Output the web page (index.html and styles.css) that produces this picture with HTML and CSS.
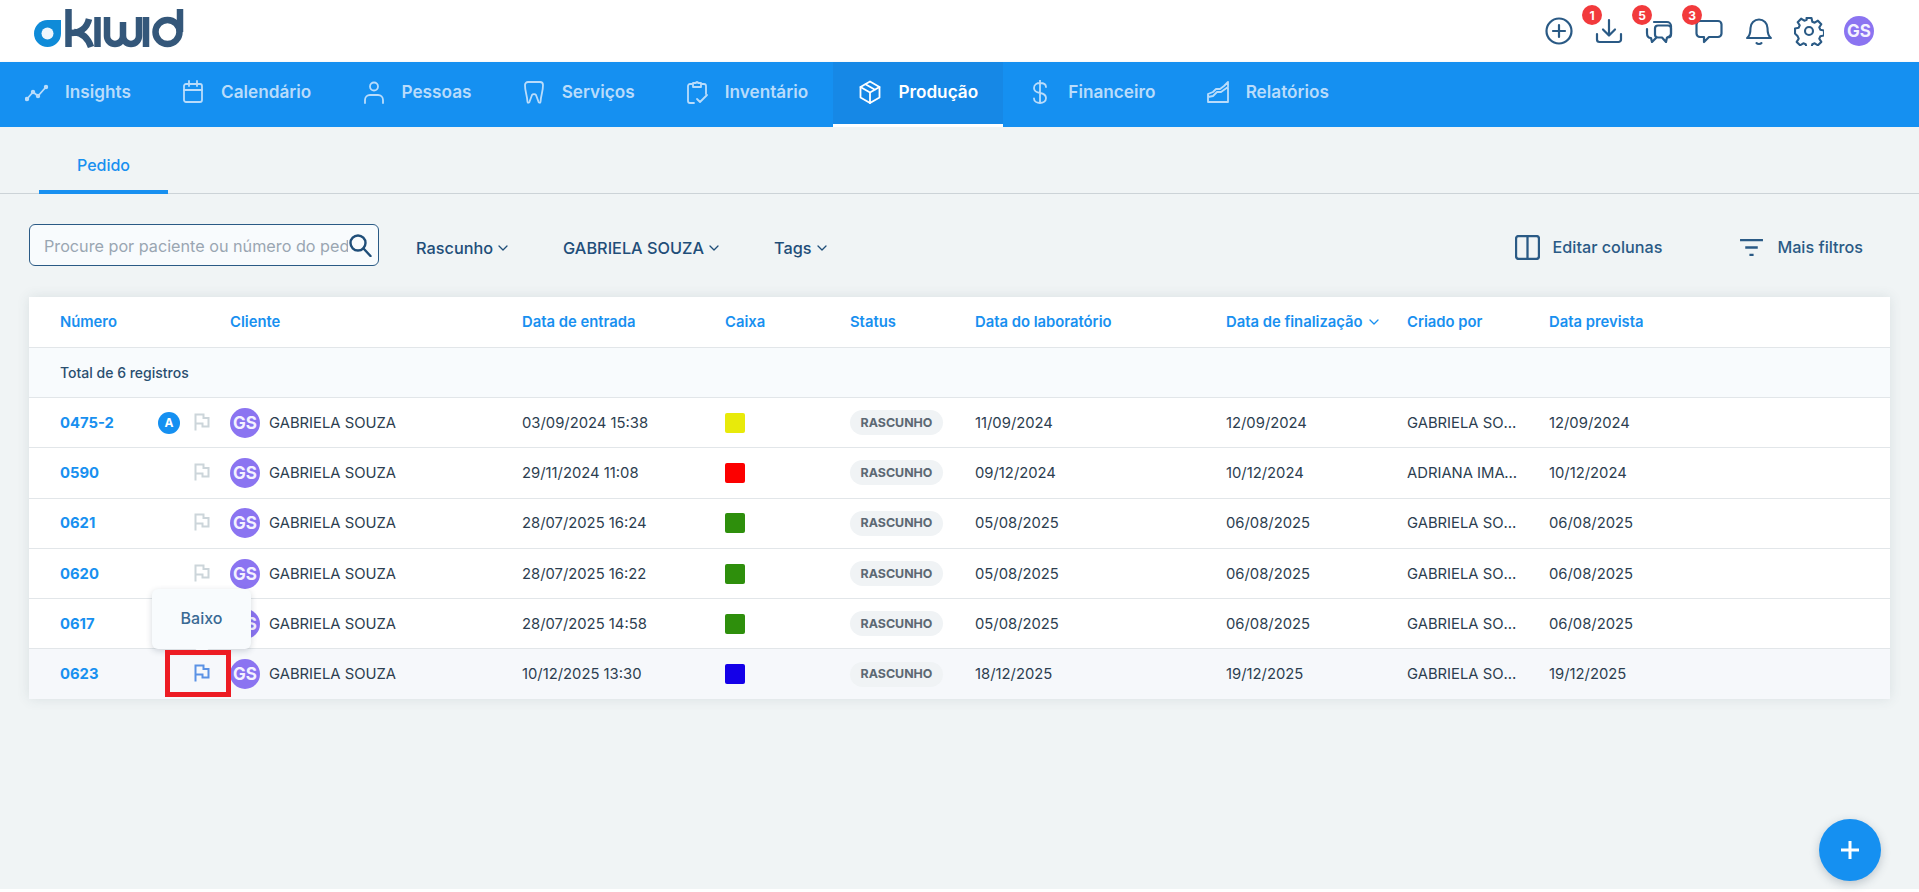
FILE: index.html
```html
<!DOCTYPE html>
<html lang="pt-BR">
<head>
<meta charset="utf-8">
<title>Kiwid - Produção</title>
<link rel="stylesheet" href="styles.css">
</head>
<body>
<svg class="sprite" aria-hidden="true">
  <symbol id="flag" viewBox="0 0 16 18"><path d="M1.500 17.500V1.500H9.500V5h5v8.500H8.500V10.500H1.500" fill="none" stroke="currentColor" stroke-width="2"/></symbol>
  <symbol id="chev" viewBox="0 0 10 6"><path d="M1 1l4 4 4-4" fill="none" stroke="currentColor" stroke-width="1.300" stroke-linecap="round" stroke-linejoin="round"/></symbol>
</svg>
<div class="app">
<header class="topbar">
  <svg class="logo" viewBox="0 0 152 40" role="img" aria-label="Kiwid">
    <path d="M13.500 12H27v13.500A13.500 13.500 0 1 1 13.500 12z" fill="#0f8bd8"/>
    <circle cx="13.500" cy="25.500" r="6" fill="#eef7fd"/>
    <g fill="none" stroke="#34577a" stroke-width="6.500">
      <path d="M34.500 1v38M37 25c9 0 16-5 18-14M40 24c9 1 14 6 17 15"/>
      <path d="M63.500 9v30"/>
      <path d="M73 9v19a8 8 0 0 0 16 0V14M89 28a8 8 0 0 0 16 0V9"/>
      <path d="M112 9v30"/>
      <circle cx="133.500" cy="24" r="12"/>
      <path d="M146 1v23"/>
    </g>
  </svg>
  <div class="top-actions">
    <span class="top-icon"><svg viewBox="0 0 28 28"><circle cx="14" cy="14" r="12.500"/><path d="M14 8v12M8 14h12"/></svg></span>
    <span class="top-icon"><svg viewBox="0 0 28 28"><path d="M14 3v15M8 12.500l6 6 6-6M2 17v5.500a2.500 2.500 0 0 0 2.500 2.500h19a2.500 2.500 0 0 0 2.500-2.500V17"/></svg><b class="badge">1</b></span>
    <span class="top-icon"><svg viewBox="0 0 28 28"><path d="M9 5h13a4 4 0 0 1 4 4v8a4 4 0 0 1-3 3"/><path d="M2 16v-4M2 16c0 3 1 5 4 5l1 4 4-4"/><path d="M13 8.500h10a3 3 0 0 1 3 3v6a3 3 0 0 1-3 3h-1l-1 4.500-4-4.500h-4a3 3 0 0 1-3-3v-6a3 3 0 0 1 3-3z"/></svg><b class="badge">5</b></span>
    <span class="top-icon"><svg viewBox="0 0 28 28"><path d="M5 4h18a3.500 3.500 0 0 1 3.500 3.500v9a3.500 3.500 0 0 1-3.500 3.500H14l-5 5v-5H5a3.500 3.500 0 0 1-3.500-3.500v-9A3.500 3.500 0 0 1 5 4z"/></svg><b class="badge">3</b></span>
    <span class="top-icon large"><svg viewBox="-1 0 30 30"><path d="M2 22c3-2 3.500-5 3.500-10a8.500 8.500 0 0 1 17 0c0 5 .5 8 3.500 10zM11.500 27c1 1.300 4 1.300 5 0"/></svg></span>
    <span class="top-icon large"><svg viewBox="0 0 30 30"><circle cx="15" cy="15" r="4"/><path d="M12.500 2h5l.8 3.700 2.400 1 3.200-2 3.400 3.500-2 3.100 1 2.400 3.700.8v5l-3.700.8-1 2.400 2 3.200-3.400 3.400-3.200-2-2.400 1-.8 3.700h-5l-.8-3.700-2.400-1-3.200 2-3.400-3.400 2-3.200-1-2.400L1 17.500v-5l3.700-.8 1-2.400-2-3.100 3.400-3.500 3.200 2 2.400-1z"/></svg></span>
    <span class="top-icon"><span class="avatar">GS</span></span>
  </div>
</header>

<nav class="mainnav">
  <a class="nav-item"><svg viewBox="0 0 24 24"><path d="M2 19l6-7 5 4 8-9"/><g class="dots"><circle cx="2" cy="19" r="1.300"/><circle cx="8" cy="12" r="1.300"/><circle cx="13" cy="16" r="1.300"/><circle cx="21" cy="7" r="1.300"/></g></svg>Insights</a>
  <a class="nav-item"><svg viewBox="0 0 24 24"><rect x="3" y="4" width="18" height="18" rx="2"/><path d="M3 10h18M8 1v5M16 1v5"/></svg>Calendário</a>
  <a class="nav-item"><svg viewBox="0 0 24 24"><circle cx="12" cy="6.500" r="4"/><path d="M3 23v-3a5 5 0 0 1 5-5h8a5 5 0 0 1 5 5v3"/></svg>Pessoas</a>
  <a class="nav-item"><svg viewBox="0 0 24 24"><path d="M6 2h12a3 3 0 0 1 3 3c0 7-2 9-2.500 17-.1 1-1.500 1-2-.2L14 15c-.7-1.300-3.300-1.300-4 0l-2.500 6.800c-.5 1.200-1.900 1.200-2 .2C5 14 3 12 3 5a3 3 0 0 1 3-3z"/></svg>Serviços</a>
  <a class="nav-item"><svg viewBox="0 0 24 24"><path d="M7 4H5a2 2 0 0 0-2 2v15a2 2 0 0 0 2 2h4M17 4h2a2 2 0 0 1 2 2v8"/><path d="M8 3h3a1 1 0 0 1 2 0h3v4H8zM12 19l3 3 7-7"/></svg>Inventário</a>
  <a class="nav-item active"><svg viewBox="0 0 24 24"><path d="M12 1.500l9.500 5.500v10.500L12 23l-9.500-5.500V7z"/><path d="M2.500 7L12 12.500 21.500 7M12 12.500V23M7.500 4.300l9.500 5.500"/></svg>Produção</a>
  <a class="nav-item"><svg viewBox="0 0 24 24"><path d="M12 0v26M18 7c0-3-3-4-6-4s-6 1.500-6 5 3 4.500 6 5 6 1.500 6 5-3 5-6 5-6-1.500-6-4.500"/></svg>Financeiro</a>
  <a class="nav-item"><svg viewBox="0 0 24 24"><path d="M2 22V14l5-2 3-3 4 0 4-3 4-4v20zM2 17l5-1 4-4h4l7-5"/></svg>Relatórios</a>
</nav>

<main class="content">
  <div class="tabs"><a class="tab">Pedido</a></div>

  <div class="toolbar">
    <label class="search">
      <input type="text" placeholder="Procure por paciente ou número do pedido">
      <svg viewBox="0 0 24 24"><circle cx="10" cy="10" r="7.500"/><path d="M15.500 15.500l7 7.500"/></svg>
    </label>
    <div class="filters">
      <span class="filter">Rascunho<svg class="chev"><use href="#chev"/></svg></span>
      <span class="filter">GABRIELA SOUZA<svg class="chev"><use href="#chev"/></svg></span>
      <span class="filter">Tags<svg class="chev"><use href="#chev"/></svg></span>
    </div>
    <div class="tools">
      <span class="tool edit"><svg viewBox="0 0 24 24"><rect x="1" y="1" width="22" height="22" rx="2.500"/><path d="M12 1v22"/></svg>Editar colunas</span>
      <span class="tool"><svg viewBox="0 0 24 24"><path d="M1 5h22M6 12h12M10 19h4"/></svg>Mais filtros</span>
    </div>
  </div>

  <section class="table">
    <div class="row head">
      <span>Número</span><span>Cliente</span><span>Data de entrada</span><span>Caixa</span><span>Status</span><span>Data do laboratório</span>
      <span>Data de finalização<svg class="chev"><use href="#chev"/></svg></span><span>Criado por</span><span>Data prevista</span>
    </div>
    <div class="total">Total de 6 registros</div>

    <div class="row item">
      <span class="num"><a>0475-2</a><i class="tag-a">A</i><svg class="flag"><use href="#flag"/></svg></span>
      <span class="client"><span class="avatar">GS</span>GABRIELA SOUZA</span>
      <span>03/09/2024 15:38</span><span><i class="box yellow"></i></span><span><em class="pill">RASCUNHO</em></span>
      <span>11/09/2024</span><span>12/09/2024</span><span class="cut">GABRIELA SOUZA</span><span>12/09/2024</span>
    </div>
    <div class="row item">
      <span class="num"><a>0590</a><svg class="flag"><use href="#flag"/></svg></span>
      <span class="client"><span class="avatar">GS</span>GABRIELA SOUZA</span>
      <span>29/11/2024 11:08</span><span><i class="box red"></i></span><span><em class="pill">RASCUNHO</em></span>
      <span>09/12/2024</span><span>10/12/2024</span><span class="cut">ADRIANA IMAGEM</span><span>10/12/2024</span>
    </div>
    <div class="row item">
      <span class="num"><a>0621</a><svg class="flag"><use href="#flag"/></svg></span>
      <span class="client"><span class="avatar">GS</span>GABRIELA SOUZA</span>
      <span>28/07/2025 16:24</span><span><i class="box green"></i></span><span><em class="pill">RASCUNHO</em></span>
      <span>05/08/2025</span><span>06/08/2025</span><span class="cut">GABRIELA SOUZA</span><span>06/08/2025</span>
    </div>
    <div class="row item">
      <span class="num"><a>0620</a><svg class="flag"><use href="#flag"/></svg></span>
      <span class="client"><span class="avatar">GS</span>GABRIELA SOUZA</span>
      <span>28/07/2025 16:22</span><span><i class="box green"></i></span><span><em class="pill">RASCUNHO</em></span>
      <span>05/08/2025</span><span>06/08/2025</span><span class="cut">GABRIELA SOUZA</span><span>06/08/2025</span>
    </div>
    <div class="row item">
      <span class="num"><a>0617</a><svg class="flag"><use href="#flag"/></svg></span>
      <span class="client"><span class="avatar">GS</span>GABRIELA SOUZA</span>
      <span>28/07/2025 14:58</span><span><i class="box green"></i></span><span><em class="pill">RASCUNHO</em></span>
      <span>05/08/2025</span><span>06/08/2025</span><span class="cut">GABRIELA SOUZA</span><span>06/08/2025</span>
    </div>
    <div class="row item hovered">
      <span class="num"><a>0623</a><svg class="flag on"><use href="#flag"/></svg>
        <span class="tooltip">Baixo</span>
        <span class="marker"></span>
      </span>
      <span class="client"><span class="avatar">GS</span>GABRIELA SOUZA</span>
      <span>10/12/2025 13:30</span><span><i class="box blue"></i></span><span><em class="pill">RASCUNHO</em></span>
      <span>18/12/2025</span><span>19/12/2025</span><span class="cut">GABRIELA SOUZA</span><span>19/12/2025</span>
    </div>
  </section>

  <button class="fab" aria-label="Adicionar"><svg viewBox="0 0 20 20"><path d="M10 1v18M1 10h18"/></svg></button>
</main>
<div class="strip"></div>
</div>
</body>
</html>
```

FILE: styles.css
```css
* { box-sizing: border-box; }
html, body { margin: 0; height: 100%; }
body { font-family: Inter, "Noto Sans", sans-serif; font-size: 14px; color: #2c3e50; background: #fff; overflow: hidden; }
.sprite { display: none; }
.app { height: 892px; display: flex; flex-direction: column; }

.topbar { height: 62px; background: #fff; display: flex; align-items: center; justify-content: space-between; padding: 0 35px 0 34px; flex: none; }
.logo { width: 152px; height: 40px; margin-top: -6px; }
.top-actions { display: flex; align-items: center; }
.top-icon { position: relative; width: 50px; height: 50px; display: flex; align-items: center; justify-content: center; }
.top-icon > svg { width: 28px; height: 28px; fill: none; stroke: #2a5a85; stroke-width: 2.2; stroke-linecap: round; stroke-linejoin: round; }
.top-icon.large > svg { width: 30px; height: 30px; stroke-width: 2.1; }
.badge { position: absolute; left: -2px; top: -1px; width: 20px; height: 20px; border-radius: 50%; background: #f23a3c; color: #fff; font-size: 12px; font-weight: 700; display: flex; align-items: center; justify-content: center; }

.avatar { width: 30px; height: 30px; border-radius: 50%; background: #8b74f1; color: #f4f2ff; font-size: 17px; font-weight: 700; display: flex; align-items: center; justify-content: center; flex: none; }

.mainnav { height: 65px; background: #1590f1; display: flex; flex: none; box-shadow: 0 1px 3px rgba(0,0,0,.12); position: relative; }
.nav-item { display: flex; align-items: center; gap: 16px; padding: 0 25.2px 3px 25px; font-size: 17.2px; font-weight: 600; color: #b9dcfb; border-bottom: 3px solid transparent; }
.nav-item svg { width: 24px; height: 24px; fill: none; stroke: #b9dcfb; stroke-width: 1.8; stroke-linecap: round; stroke-linejoin: round; flex: none; }
.nav-item .dots { fill: #b9dcfb; }
.nav-item.active { background: #1688e6; color: #fff; border-bottom-color: #fff; }
.nav-item.active svg { stroke: #fff; }

.content { flex: 1; background: #f0f4f5; position: relative; display: flex; flex-direction: column; }
.tabs { height: 67px; border-bottom: 1px solid #ccd3d7; padding-left: 39px; display: flex; flex: none; }
.tab { width: 129px; height: 67px; padding-top: 13px; display: flex; align-items: center; justify-content: center; color: #1890f0; font-size: 16px; font-weight: 500; border-bottom: 4px solid #1890f0; }

.toolbar { display: flex; align-items: center; height: 42px; margin: 30px 0 31px 29px; flex: none; }
.search { width: 350px; height: 42px; flex: none; border: 1px solid #2a5a85; border-radius: 6px; background: #f8fbfd; display: flex; align-items: center; padding: 0 6px 0 14px; }
.search input { flex: 1; min-width: 0; border: 0; outline: 0; background: transparent; font: 400 16.2px Inter, sans-serif; color: #2c3e50; padding: 2px 0 0; }
.search input::placeholder { color: #9aa6b2; opacity: 1; }
.search svg { width: 24px; height: 24px; fill: none; stroke: #1f4e79; stroke-width: 2.4; stroke-linecap: round; flex: none; }
.filters { display: flex; gap: 55px; margin-left: 37px; padding-top: 5px; }
.filter { display: flex; align-items: center; gap: 5px; font-size: 16.3px; font-weight: 500; color: #1f4e79; }
.chev { width: 10px; height: 6px; color: currentColor; flex: none; }
.tools { margin-left: auto; display: flex; align-items: center; gap: 77px; padding: 4px 56px 0 0; }
.tool { display: flex; align-items: center; gap: 13px; font-size: 16.2px; font-weight: 500; color: #2a5a85; }
.tool svg { width: 25px; height: 25px; fill: none; stroke: #2a5a85; stroke-width: 2.2; flex: none; }

.table { margin: 0 29px; background: #fff; box-shadow: 0 0 12px rgba(60,80,90,.12); flex: none; }
.row { display: grid; grid-template-columns: 170px 292px 203px 125px 125px 251px 181px 142px 1fr; align-items: center; padding-left: 31px; }
.head { height: 50px; padding-bottom: 1px; color: #1890f0; font-weight: 600; font-size: 14.8px; }
.head span { display: flex; align-items: center; gap: 6px; }
.total { height: 50px; background: #f8fbfd; border-top: 1px solid #e2e6e9; padding-left: 31px; display: flex; align-items: center; font-size: 14px; font-weight: 500; color: #2a4f70; }
.item { height: 50.3px; border-top: 1px solid #e2e6e9; font-size: 14.8px; color: #2c3e50; }
.hovered { background: #f6f8fb; }
.num { position: relative; display: flex; align-items: center; height: 100%; }
.num a { color: #1890f0; font-weight: 700; font-size: 14.8px; }
.tag-a { position: absolute; left: 98px; top: 50%; margin-top: -11px; width: 22px; height: 22px; border-radius: 50%; background: #1590f1; color: #fff; font-style: normal; font-size: 12px; font-weight: 700; display: flex; align-items: center; justify-content: center; }
.flag { position: absolute; left: 134px; top: 50%; margin-top: -10px; width: 16px; height: 18px; color: #ccd5da; }
.flag.on { color: #5b92e5; }
.client { display: flex; align-items: center; gap: 9px; }
.box { display: block; width: 20px; height: 20px; border-radius: 2px; }
.yellow { background: #e8ea0a; }
.red { background: #fc0000; }
.green { background: #2e8f0c; }
.blue { background: #1400e8; }
.pill { display: inline-flex; align-items: center; justify-content: center; width: 93px; height: 25px; padding-bottom: 1px; border-radius: 13px; background: #f0f3f5; color: #5c6873; font-size: 12.4px; font-weight: 700; font-style: normal; }
.cut { display: block; width: 112px; overflow: hidden; white-space: nowrap; text-overflow: ellipsis; }

.tooltip { position: absolute; left: 92px; bottom: 50px; width: 99px; height: 60px; padding-bottom: 2px; background: #f8fbfd; border-radius: 6px; box-shadow: 0 2px 6px rgba(40,60,80,.2); color: #3a6a94; font-size: 16px; font-weight: 500; display: flex; align-items: center; justify-content: center; z-index: 3; }
.tooltip::after { content: ""; position: absolute; left: 44px; bottom: -4px; width: 12px; height: 12px; background: #f8fbfd; transform: rotate(45deg); z-index: -1; }
.marker { position: absolute; left: 105px; top: 1px; width: 66px; height: 47px; border: 5px solid #ed1c24; z-index: 4; }

.fab { position: absolute; right: 38px; bottom: 8px; width: 62px; height: 62px; border: 0; border-radius: 50%; background: #1590f1; box-shadow: 0 3px 10px rgba(40,60,80,.25); display: flex; align-items: center; justify-content: center; padding: 0; }
.fab svg { width: 20px; height: 20px; stroke: #fff; stroke-width: 3; fill: none; }

.strip { height: 3px; flex: none; background: #fff; }
```
